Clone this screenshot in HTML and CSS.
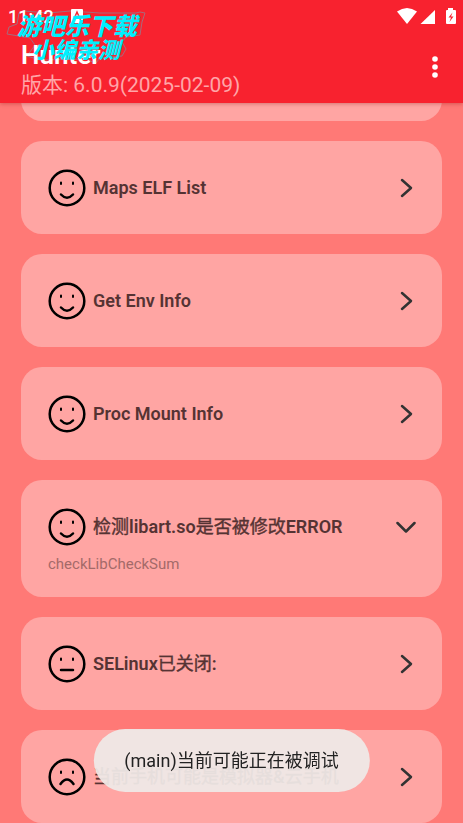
FILE: index.html
```html
<!DOCTYPE html>
<html lang="zh-CN">
<head>
<meta charset="utf-8">
<meta name="viewport" content="width=device-width, initial-scale=1">
<title>Hunter</title>
<link rel="stylesheet" href="styles.css">
</head>
<body>
<svg class="symbols" aria-hidden="true">
  <symbol id="happy" viewBox="0 0 38 38"><circle cx="19" cy="19" r="17.3"/><path class="eyes" d="M13 13.500v1.500M25 13.500v1.500"/><path d="M13 25.500q6 6.500 12 0"/></symbol>
  <symbol id="neutral" viewBox="0 0 38 38"><circle cx="19" cy="19" r="17.3"/><path class="eyes" d="M13 13.500v1.500M25 13.500v1.500"/><path d="M13 25h12"/></symbol>
  <symbol id="sad" viewBox="0 0 38 38"><circle cx="19" cy="19" r="17.3"/><path class="eyes" d="M13 13.500v1.500M25 13.500v1.500"/><path d="M12.500 26q6.500-9 13 0"/></symbol>
  <symbol id="right" viewBox="0 0 20 20"><path d="M6 2l9 8-9 8"/></symbol>
  <symbol id="down" viewBox="0 0 20 20"><path d="M1.500 6l8.500 8.500 8.500-8.500"/></symbol>
</svg>
<header class="header">
  <div class="status">
    <span class="time">11:42</span>
    <svg class="note" viewBox="0 0 12 14"><path d="M1 0h10q1 0 1 1v12q0 1-1 1H1q-1 0-1-1V1q0-1 1-1z" fill="#fff"/><path d="M2.500 11L6 3l3.500 8M4 8.500h4" fill="none" stroke="#f8222f" stroke-width="1.500"/></svg>
    <svg class="signals" viewBox="0 0 60 18"><path d="M0 4.500Q10-2.500 20 4.500L10 17z"/><path d="M38 3v14H23.500z"/><path d="M51 1h5v2h2q1 0 1 1v12q0 1-1 1h-8q-1 0-1-1V4q0-1 1-1h1z"/><path d="M55.500 5.500L51.500 10.500H54L52.500 15l4-5.500H54z" fill="#f8222f"/></svg>
  </div>
  <div class="bar">
    <div>
      <h1 class="title">Hunter</h1>
      <p class="version">版本: 6.0.9(2025-02-09)</p>
    </div>
    <button class="menu" aria-label="菜单"><svg viewBox="0 0 6 22"><circle cx="3" cy="3" r="2.800"/><circle cx="3" cy="11" r="2.800"/><circle cx="3" cy="19" r="2.800"/></svg></button>
  </div>
  <div class="watermark">
    <svg class="outline" viewBox="0 0 148 58"><path d="M19 1L24 -1 48 1 70 -1 100 1 136 1 140 0 145 1 142 10 140 23 126 25 122 30 126 37 122 44 100 46 95 52 88 47 40 48 27 44 35 33 30 26 7 22 9 15 17 12z"/></svg>
    <span class="mark-top">游吧乐下载</span>
    <span class="mark-bottom">小编亲测</span>
  </div>
</header>
<main class="list">
  <div class="card card-passed"></div>
  <button class="card"><svg class="face"><use href="#happy"/></svg><span class="name">Maps ELF List</span><svg class="arrow"><use href="#right"/></svg></button>
  <button class="card"><svg class="face"><use href="#happy"/></svg><span class="name">Get Env Info</span><svg class="arrow"><use href="#right"/></svg></button>
  <button class="card"><svg class="face"><use href="#happy"/></svg><span class="name">Proc Mount Info</span><svg class="arrow"><use href="#right"/></svg></button>
  <button class="card card-open"><svg class="face"><use href="#happy"/></svg><span class="name"><span class="han">检测</span>libart.so<span class="han">是否被修改</span>ERROR</span><svg class="arrow"><use href="#down"/></svg><span class="detail">checkLibCheckSum</span></button>
  <button class="card"><svg class="face"><use href="#neutral"/></svg><span class="name">SELinux<span class="han">已关闭</span>:</span><svg class="arrow"><use href="#right"/></svg></button>
  <button class="card"><svg class="face"><use href="#sad"/></svg><span class="name"><span class="han">当前手机可能是模拟器</span>&amp;<span class="han">云手机</span></span><svg class="arrow"><use href="#right"/></svg></button>
</main>
<div class="toast" role="status">(main)当前可能正在被调试</div>
</body>
</html>
```
FILE: styles.css
```css
* { box-sizing: border-box; }

body {
  margin: 0;
  height: 100vh;
  overflow: hidden;
  background: #ff7976;
  font-family: Roboto, "Noto Sans CJK SC", sans-serif;
}

.symbols { position: absolute; width: 0; height: 0; }

.header {
  position: relative;
  z-index: 1;
  padding: 6px 0 2px;
  background: #f8222f;
  color: #fff;
  box-shadow: 0 1px 4px rgba(120, 0, 0, 0.3);
}

.status {
  display: flex;
  align-items: center;
  height: 20px;
  padding: 0 6px 0 8px;
}

.time { font-size: 18px; font-weight: 500; }

.note { width: 12px; height: 14px; margin-left: 17px; }

.signals { width: 60px; height: 18px; margin-left: auto; fill: #fff; }

.bar {
  display: flex;
  align-items: flex-start;
  justify-content: space-between;
  padding: 14px 20px 0 21px;
}

.title {
  margin: 0;
  font-size: 26px;
  line-height: 30px;
  font-weight: 600;
}

.version {
  margin: 0;
  font-size: 21px;
  line-height: 31px;
  color: #ffa5a8;
}

.menu {
  display: flex;
  align-items: center;
  justify-content: center;
  width: 16px;
  height: 54px;
  padding: 0;
  border: 0;
  background: none;
}

.menu svg { width: 6px; height: 22px; fill: #fff; }

.watermark {
  position: absolute;
  top: 12px;
  left: 17px;
  display: flex;
  flex-direction: column;
  font-family: "Noto Sans CJK SC", sans-serif;
  font-style: italic;
  font-weight: 900;
  color: #00f0ff;
}

.outline {
  position: absolute;
  top: 0;
  left: -17px;
  z-index: -1;
  width: 148px;
  height: 58px;
  overflow: visible;
  fill: none;
  stroke: #a86a7c;
  stroke-width: 1;
}

.mark-top { font-size: 24px; line-height: 26px; }

.mark-bottom { padding-left: 15px; font-size: 22px; line-height: 20px; }

.list {
  display: flex;
  flex-direction: column;
  gap: 20px;
  padding: 0 21px;
}

.card {
  display: grid;
  grid-template-columns: 38px 1fr 20px;
  grid-template-rows: 38px;
  column-gap: 7px;
  align-content: start;
  align-items: center;
  flex-shrink: 0;
  min-height: 93px;
  padding: 28px 26px 23px 27px;
  border: 0;
  border-radius: 21px;
  background: #ffa5a3;
  font-family: inherit;
  text-align: left;
}

.card-passed { margin-top: -75px; }

.card-open { grid-template-rows: 38px 28px; }

.face {
  width: 38px;
  height: 38px;
  fill: none;
  stroke: #000;
  stroke-width: 2.5;
  stroke-linecap: round;
}

.eyes { stroke-width: 2; }

.name {
  font-size: 18px;
  line-height: 24px;
  font-weight: 600;
  color: #553333;
  white-space: nowrap;
}

.han {
  font-weight: 400;
  -webkit-text-stroke: 0.4px currentColor;
}

.arrow {
  width: 20px;
  height: 20px;
  fill: none;
  stroke: #333;
  stroke-width: 2.5;
  stroke-linecap: round;
  stroke-linejoin: round;
}

.detail {
  grid-column: 1 / -1;
  align-self: end;
  font-size: 15px;
  line-height: 20px;
  color: #a46a69;
}

.toast {
  position: fixed;
  z-index: 2;
  bottom: 31px;
  left: 50%;
  transform: translateX(-50%);
  padding: 18px 31px;
  border-radius: 32px;
  background: rgba(239, 233, 231, 0.94);
  font-size: 18px;
  line-height: 27px;
  color: #222;
  white-space: nowrap;
}
```
